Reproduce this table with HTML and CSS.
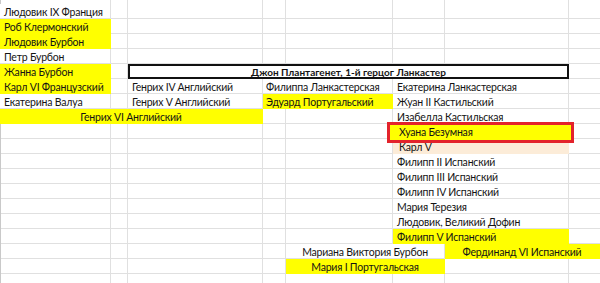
FILE: index.html
```html
<!DOCTYPE html>
<html lang="ru">
<head>
<meta charset="utf-8">
<title>Родословная</title>
<link rel="stylesheet" href="styles.css">
</head>
<body>
<div class="sheet">
  <div class="cell r2 ca">Людовик IX Франция</div>
  <div class="cell r3 ca yellow">Роб Клермонский</div>
  <div class="cell r4 ca yellow">Людовик Бурбон</div>
  <div class="cell r5 ca">Петр Бурбон</div>
  <div class="cell r6 ca yellow">Жанна Бурбон</div>
  <div class="cell r6 c-box boxed">Джон Плантагенет, 1-й герцог Ланкастер</div>

  <div class="cell r7 ca yellow">Карл VI Французский</div>
  <div class="cell r7 cc">Генрих IV Английский</div>
  <div class="cell r7 cde">Филиппа Ланкастерская</div>
  <div class="cell r7 cfg">Екатерина Ланкастерская</div>

  <div class="cell r8 ca">Екатерина Валуа</div>
  <div class="cell r8 cc">Генрих V Английский</div>
  <div class="cell r8 cde yellow">Эдуард Португальский</div>
  <div class="cell r8 cfg">Жуан II Кастильский</div>

  <div class="cell r9 cac yellow center">Генрих VI Английский</div>
  <div class="cell r9 cfg">Изабелла Кастильская</div>

  <div class="cell r10 cfg yellow marked"><span class="label">Хуана Безумная</span></div>
  <div class="cell r11 cfg peach indent">Карл V</div>
  <div class="cell r12 cfg">Филипп II Испанский</div>
  <div class="cell r13 cfg">Филипп III Испанский</div>
  <div class="cell r14 cfg">Филипп IV Испанский</div>
  <div class="cell r15 cfg">Мария Терезия</div>
  <div class="cell r16 cfg">Людовик, Великий Дофин</div>
  <div class="cell r17 cfg yellow">Филипп V Испанский</div>

  <div class="cell r18 cef center">Мариана Виктория Бурбон</div>
  <div class="cell r18 cgh yellow center">Фердинанд VI Испанский</div>
  <div class="cell r19 cef yellow center">Мария I Португальская</div>
</div>
</body>
</html>
```

FILE: styles.css
```css
html, body {
  margin: 0;
  padding: 0;
  background: #ffffff;
}

.sheet {
  --grid: #e0e0e0;
  position: relative;
  width: 600px;
  height: 283px;
  overflow: hidden;
  display: grid;
  grid-template-columns: 111px 17px 135px 23px 107px 52px 124px 31px;
  grid-template-rows: 4px repeat(18, 15px) 9px;
  font-family: Lato, "Open Sans", sans-serif;
  font-size: 10.5px;
  letter-spacing: -0.2px;
  color: #141414;
  background-color: #ffffff;
  background-image:
    linear-gradient(#c9c9c9, #c9c9c9),
    linear-gradient(var(--grid), var(--grid)),
    linear-gradient(var(--grid), var(--grid)),
    linear-gradient(var(--grid), var(--grid)),
    linear-gradient(var(--grid), var(--grid)),
    linear-gradient(var(--grid), var(--grid)),
    linear-gradient(var(--grid), var(--grid)),
    linear-gradient(var(--grid), var(--grid)),
    repeating-linear-gradient(to bottom, transparent 0 14px, var(--grid) 14px 15px);
  background-size:
    1px 100%, 1px 100%, 1px 100%, 1px 100%, 1px 100%, 1px 100%, 1px 100%, 1px 100%,
    100% 100%;
  background-position:
    0 0, 110px 0, 127px 0, 262px 0, 285px 0, 392px 0, 444px 0, 568px 0,
    0 4px;
  background-repeat:
    no-repeat, no-repeat, no-repeat, no-repeat, no-repeat, no-repeat, no-repeat, no-repeat,
    repeat;
}

.cell {
  box-sizing: border-box;
  background: #ffffff;
  border-right: 1px solid var(--grid);
  border-bottom: 1px solid var(--grid);
  padding: 1px 3px 0 4px;
  line-height: 14px;
  white-space: nowrap;
  overflow: hidden;
}

/* rows */
.r2 { grid-row: 2; }
.r3 { grid-row: 3; }
.r4 { grid-row: 4; }
.r5 { grid-row: 5; }
.r6 { grid-row: 6; }
.r7 { grid-row: 7; }
.r8 { grid-row: 8; }
.r9 { grid-row: 9; }
.r10 { grid-row: 10; }
.r11 { grid-row: 11; }
.r12 { grid-row: 12; }
.r13 { grid-row: 13; }
.r14 { grid-row: 14; }
.r15 { grid-row: 15; }
.r16 { grid-row: 16; }
.r17 { grid-row: 17; }
.r18 { grid-row: 18; }
.r19 { grid-row: 19; }

/* columns */
.ca { grid-column: 1; }
.cc { grid-column: 3; }
.cde { grid-column: 4 / 6; padding-left: 3px; }
.cfg { grid-column: 6 / 8; }
.cac { grid-column: 1 / 4; }
.cef { grid-column: 5 / 7; }
.cgh { grid-column: 7 / 9; }
.c-box { grid-column: 3 / 8; }

.center {
  text-align: center;
  padding-left: 0;
  padding-right: 0;
}

.yellow {
  background: #ffff00;
  border-color: #ffff00;
}

.peach {
  background: #fcecd8;
  border-color: #fcecd8;
}

.indent {
  padding-left: 6px;
}

.boxed {
  border: 2px solid #111111;
  font-weight: 700;
  font-size: 10px;
  letter-spacing: 0;
  text-align: center;
  line-height: 11px;
  padding: 1px 0 0;
}

.marked {
  position: relative;
  overflow: visible;
  padding-left: 6px;
}

.marked::before {
  content: "";
  position: absolute;
  left: -6px;
  right: -6px;
  top: -2px;
  bottom: -5px;
  box-sizing: border-box;
  border: 3px solid #e3232b;
  background: #ffff00;
  z-index: 0;
}

.label {
  position: relative;
  z-index: 1;
}
```
